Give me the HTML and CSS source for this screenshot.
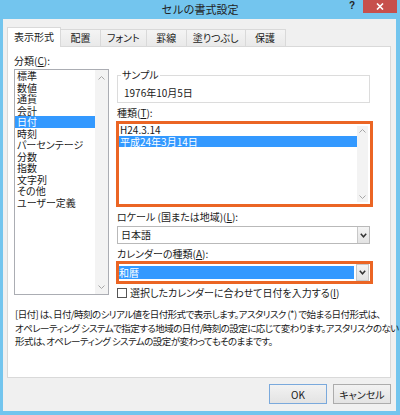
FILE: index.html
```html
<!DOCTYPE html>
<html lang="ja">
<head>
  <meta charset="UTF-8">
  <title>セルの書式設定</title>
  <link rel="stylesheet" href="styles.css">
</head>
<body>
  <div class="window">
    <div class="titlebar">
      <div></div>
      <div class="title">セルの書式設定</div>
      <div class="controls">
        <span class="help">?</span>
        <span class="close">
          <svg width="8" height="7" viewBox="0 0 8 7"><path d="M1 0.5 L7 6.5 M7 0.5 L1 6.5" stroke="#fff" stroke-width="1.6"/></svg>
        </span>
      </div>
    </div>

    <div class="dialog">
      <!-- Tabs -->
      <div class="tabs">
        <div class="tab active">表示形式</div>
        <div class="tab">配置</div>
        <div class="tab">フォント</div>
        <div class="tab">罫線</div>
        <div class="tab">塗りつぶし</div>
        <div class="tab">保護</div>
      </div>

      <div class="panel">
        <div class="top">
          <!-- Category list -->
          <div class="left-col">
            <div class="label">分類(<u>C</u>):</div>
            <div class="listbox">
              <div class="items">
                <div class="item">標準</div>
                <div class="item">数値</div>
                <div class="item">通貨</div>
                <div class="item">会計</div>
                <div class="item selected">日付</div>
                <div class="item">時刻</div>
                <div class="item">パーセンテージ</div>
                <div class="item">分数</div>
                <div class="item">指数</div>
                <div class="item">文字列</div>
                <div class="item">その他</div>
                <div class="item">ユーザー定義</div>
              </div>
              <div class="scrollbar">
                <svg width="7" height="4" viewBox="0 0 7 4"><path d="M0.5 3.5 L3.5 0.5 L6.5 3.5" fill="none" stroke="#a6a6a6"/></svg>
                <svg width="7" height="4" viewBox="0 0 7 4"><path d="M0.5 0.5 L3.5 3.5 L6.5 0.5" fill="none" stroke="#a6a6a6"/></svg>
              </div>
            </div>
          </div>

          <div class="right-col">
            <fieldset class="sample">
              <legend>サンプル</legend>
              <div class="sample-value">1976年10月5日</div>
            </fieldset>

            <div class="label gap">種類(<u>T</u>):</div>
            <div class="typelist marked">
              <div class="items">
                <div class="item">H24.3.14</div>
                <div class="item selected">平成24年3月14日</div>
              </div>
              <div class="scrollbar">
                <svg width="7" height="4" viewBox="0 0 7 4"><path d="M0.5 3.5 L3.5 0.5 L6.5 3.5" fill="none" stroke="#a6a6a6"/></svg>
                <svg width="7" height="4" viewBox="0 0 7 4"><path d="M0.5 0.5 L3.5 3.5 L6.5 0.5" fill="none" stroke="#a6a6a6"/></svg>
              </div>
            </div>

            <div class="label gap">ロケール (国または地域)(<u>L</u>):</div>
            <div class="combo locale">
              <div class="combo-value">日本語</div>
              <div class="drop">
                <svg width="7" height="5" viewBox="0 0 7 5"><path d="M0.8 0.8 L3.5 3.8 L6.2 0.8" fill="none" stroke="#333" stroke-width="1.5"/></svg>
              </div>
            </div>

            <div class="label gap">カレンダーの種類(<u>A</u>):</div>
            <div class="combo calendar marked">
              <div class="combo-value selected">和暦</div>
              <div class="drop">
                <svg width="7" height="5" viewBox="0 0 7 5"><path d="M0.8 0.8 L3.5 3.8 L6.2 0.8" fill="none" stroke="#333" stroke-width="1.5"/></svg>
              </div>
            </div>

            <label class="check">
              <span class="box"></span>
              <span>選択したカレンダーに合わせて日付を入力する(<u>I</u>)</span>
            </label>
          </div>
        </div>

        <p class="desc">
          [日付] は、日付/時刻のシリアル値を日付形式で表示します。アスタリスク (*) で始まる日付形式は、<br>
          オペレーティング システムで指定する地域の日付/時刻の設定に応じて変わります。アスタリスクのない<br>
          形式は、オペレーティング システムの設定が変わってもそのままです。
        </p>
      </div>

      <div class="buttons">
        <button class="btn default">OK</button>
        <button class="btn">キャンセル</button>
      </div>
    </div>
  </div>
</body>
</html>
```

FILE: styles.css
```css
body {
  margin: 0;
  width: 400px;
  height: 415px;
  overflow: hidden;
  background: #73c5ee;
  font-family: "Noto Sans CJK JP", sans-serif;
  font-size: 10px;
  color: #1a1a1a;
  font-feature-settings: "palt";
}
.window {
  height: 415px;
  display: flex;
  flex-direction: column;
}
.titlebar {
  height: 19px;
  display: grid;
  grid-template-columns: 1fr auto 1fr;
}
.title {
  font-size: 11px;
  line-height: 18px;
  color: #222;
  font-feature-settings: normal;
}
.controls {
  display: flex;
  justify-content: flex-end;
  align-items: flex-start;
  padding-right: 3px;
}
.help {
  font-family: "Liberation Sans", sans-serif;
  font-weight: bold;
  font-size: 10px;
  line-height: 11px;
  color: #222;
  margin-right: 8px;
}
.close {
  width: 34px;
  height: 13px;
  background: #c7504c;
  display: flex;
  align-items: center;
  justify-content: center;
}
.dialog {
  flex: 1;
  margin: 0 4px 4px 3px;
  background: #f0f0f0;
  padding: 8px 5px 0 4px;
  display: flex;
  flex-direction: column;
}

/* tabs */
.tabs {
  display: flex;
  align-items: flex-end;
  height: 19px;
}
.tab {
  box-sizing: border-box;
  height: 17px;
  min-width: 41px;
  padding: 0 6px;
  margin-left: -1px;
  border: 1px solid #d9d9d9;
  border-bottom: none;
  background: linear-gradient(#f4f4f4, #e9e9e9);
  line-height: 15px;
  text-align: center;
}
.tab.active {
  height: 20px;
  margin-left: 0;
  margin-bottom: -1px;
  background: #fff;
  position: relative;
  z-index: 1;
  line-height: 18px;
}
.panel {
  box-sizing: border-box;
  height: 332px;
  background: #fff;
  border: 1px solid #d9d9d9;
  padding: 8px 6px 0 6px;
}
.top {
  display: flex;
  gap: 8px;
}
.label {
  line-height: 12px;
  white-space: nowrap;
}
.label.gap {
  margin-top: 4px;
}

/* category list */
.left-col {
  width: 95px;
}
.listbox {
  box-sizing: border-box;
  margin-top: 2px;
  height: 226px;
  border: 1px solid #abadb3;
  display: flex;
}
.items {
  flex: 1;
}
.item {
  line-height: 11.55px;
  padding-left: 2px;
  white-space: nowrap;
}
.item.selected {
  background: #3399ff;
  color: #fff;
}
.scrollbar {
  width: 13px;
  background: #f3f3f3;
  display: flex;
  flex-direction: column;
  justify-content: space-between;
  align-items: center;
  padding: 6px 0 5px;
  box-sizing: border-box;
}

/* right side */
.right-col {
  width: 253px;
  padding-top: 14px;
}
.sample {
  margin: 0;
  padding: 0 4px 3px 3px;
  border: 1px solid #dcdcdc;
  min-width: 0;
}
.sample legend {
  padding: 0 1px;
  line-height: 12px;
}
.sample-value {
  margin-top: 6px;
  padding-left: 3px;
  line-height: 12px;
}
.marked {
  border: 3px solid #eb6524;
  margin: 0 -3px 0 -1px;
}
.typelist {
  box-sizing: border-box;
  height: 86px;
  margin-top: 2px;
  display: flex;
  background: #fff;
}
.typelist .item {
  line-height: 11.5px;
  padding-left: 1px;
}
.typelist .scrollbar {
  width: 11px;
  margin: 2px 2px 2px 0;
  padding: 3px 0;
}
.combo {
  box-sizing: border-box;
  display: flex;
  background: #fff;
}
.locale {
  height: 18px;
  margin-top: 3px;
  border: 1px solid #b9b9b9;
}
.calendar {
  height: 23px;
  margin-top: 1px;
}
.combo-value {
  flex: 1;
  padding-left: 3px;
  line-height: 16px;
}
.calendar .combo-value {
  margin: 2px 1px 2px 0;
  padding-left: 0;
  line-height: 13px;
}
.combo-value.selected {
  background: #3399ff;
  color: #fff;
}
.drop {
  width: 11px;
  margin: 0 0 0 1px;
  border-left: 1px solid #c8c8c8;
  background: linear-gradient(#f4f4f4, #e3e3e3);
  display: flex;
  align-items: center;
  justify-content: center;
}
.calendar .drop {
  margin: 0 1px 0 1px;
  border: 1px solid #c8c8c8;
}
.check {
  display: flex;
  align-items: center;
  gap: 3px;
  margin-top: 3px;
  line-height: 12px;
  white-space: nowrap;
}
.check .box {
  box-sizing: border-box;
  width: 10px;
  height: 10px;
  border: 1px solid #555;
  background: #fff;
}

/* description */
.desc {
  margin: 9px 0 0 1px;
  font-size: 9.5px;
  letter-spacing: -0.55px;
  line-height: 13.5px;
  white-space: nowrap;
}

/* buttons */
.buttons {
  display: flex;
  justify-content: flex-end;
  gap: 6px;
  margin-top: 6px;
}
.btn {
  width: 58px;
  height: 20px;
  padding: 0;
  border: 1px solid #acacac;
  background: linear-gradient(#f2f2f2, #e3e3e3);
  font-family: "Noto Sans CJK JP", sans-serif;
  font-size: 10px;
  color: #1a1a1a;
  font-feature-settings: "palt";
}
.btn.default {
  border-color: #7aa9dc;
}
```
